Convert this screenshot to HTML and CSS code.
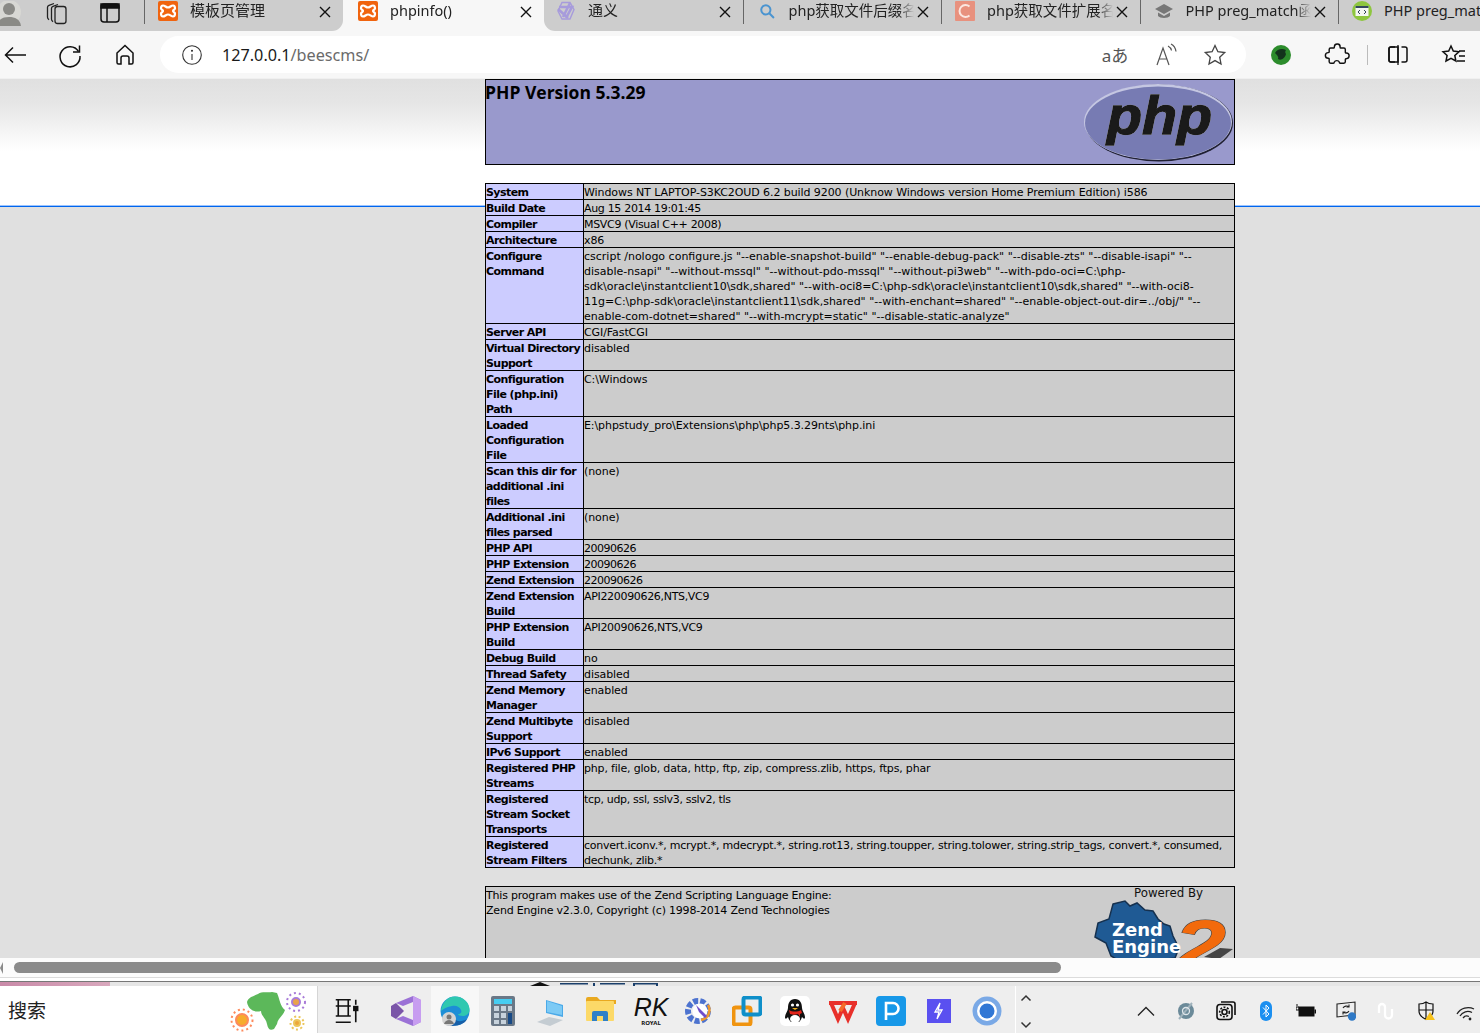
FILE: index.html
```html
<!DOCTYPE html>
<html lang="zh">
<head>
<meta charset="utf-8">
<title>phpinfo()</title>
<link rel="stylesheet" href="styles.css">
</head>
<body>
<div class="tabstrip">
  <div class="strip-left">
    <svg class="avatar" viewBox="0 0 22 26"><circle cx="9" cy="11" r="12" fill="#d8d8d4"/><circle cx="9" cy="8" r="6" fill="#8a8a86"/><path d="M-3 25c1-7 6-9 12-9s11 2 12 9z" fill="#8a8a86"/></svg>
    <svg class="ticon coll" viewBox="0 0 24 24" fill="none" stroke="#222" stroke-width="1.3"><path d="M9 2.500l-5 1.800c-1 .4-1.500 1-1.500 2v10c0 1 .5 1.700 1.500 2.500"/><path d="M13 3.500l-5 1.800c-1 .4-1.500 1-1.500 2v11c0 1 .5 1.700 1.500 2.500"/><rect x="10" y="5.500" width="11" height="17" rx="2.500"/></svg>
    <svg class="ticon vtab" viewBox="0 0 24 24" fill="none" stroke="#111" stroke-width="1.500"><rect x="3" y="3" width="18" height="18" rx="3"/><path d="M3 3h18v4H3z" fill="#111"/><path d="M9 7v14"/></svg>
  </div>
  <div class="tab">
    <svg class="fav" viewBox="0 0 20 20"><rect width="20" height="20" rx="2" fill="#f0640f"/><path d="M5 4.500c2 0 3 2 5 2s3-2 5-2 2 2 2 3-2 1.500-2 2.500 2 1.500 2 2.500-.5 3-2 3-3-2-5-2-3 2-5 2-2-2-2-3 2-1.500 2-2.500-2-1.500-2-2.500.5-3 2-3z" fill="none" stroke="#fff" stroke-width="2.200"/></svg>
    <span class="title zh">模板页管理</span>
    <svg class="close" viewBox="0 0 12 12"><path d="M1 1l10 10M11 1L1 11"/></svg>
  </div>
  <div class="tab active">
    <svg class="fav" viewBox="0 0 20 20"><rect width="20" height="20" rx="2" fill="#f0640f"/><path d="M5 4.500c2 0 3 2 5 2s3-2 5-2 2 2 2 3-2 1.500-2 2.500 2 1.500 2 2.500-.5 3-2 3-3-2-5-2-3 2-5 2-2-2-2-3 2-1.500 2-2.500-2-1.500-2-2.500.5-3 2-3z" fill="none" stroke="#fff" stroke-width="2.200"/></svg>
    <span class="title">phpinfo()</span>
    <svg class="close" viewBox="0 0 12 12"><path d="M1 1l10 10M11 1L1 11"/></svg>
  </div>
  <div class="tab after-active">
    <svg class="fav" viewBox="0 0 20 20" fill="none" stroke="#a79bdc" stroke-width="2.600"><path d="M6 1.500l8 0 4 7-4 9.500-8 0-4-8z" stroke-width="1.400"/><path d="M3 6h13l-6 11M14 2l-7 14M2 8l10 9"/></svg>
    <span class="title zh">通义</span>
    <svg class="close" viewBox="0 0 12 12"><path d="M1 1l10 10M11 1L1 11"/></svg>
  </div>
  <div class="tab">
    <svg class="fav" viewBox="-3 -3 26 26" fill="none" stroke="#4a94d0" stroke-width="2.600"><circle cx="8.500" cy="8.500" r="6"/><path d="M13 13l6 6"/></svg>
    <span class="title">php获取文件后缀名</span>
    <svg class="close" viewBox="0 0 12 12"><path d="M1 1l10 10M11 1L1 11"/></svg>
  </div>
  <div class="tab">
    <svg class="fav" viewBox="0 0 20 20"><rect width="20" height="20" rx="1" fill="#e8917e"/><path d="M14.500 5.500a6 6 0 1 0 0 9" fill="none" stroke="#fbe6e0" stroke-width="2"/></svg>
    <span class="title">php获取文件扩展名</span>
    <svg class="close" viewBox="0 0 12 12"><path d="M1 1l10 10M11 1L1 11"/></svg>
  </div>
  <div class="tab">
    <svg class="fav" viewBox="0 0 20 20" fill="#777"><path d="M10 3L1 8l9 5 9-5z"/><path d="M4 11.500V15c2 2.500 10 2.500 12 0v-3.500L10 15z"/></svg>
    <span class="title">PHP preg_match函数</span>
    <svg class="close" viewBox="0 0 12 12"><path d="M1 1l10 10M11 1L1 11"/></svg>
  </div>
  <div class="tab last">
    <svg class="fav" viewBox="0 0 20 20"><circle cx="10" cy="10" r="10" fill="#8ec63f"/><rect x="3.500" y="5" width="13" height="10" fill="#f4f6f2"/><rect x="3.500" y="5" width="13" height="2" fill="#34495e"/><path d="M8 9l-2 2 2 2M12 9l2 2-2 2" fill="none" stroke="#345" stroke-width="1"/></svg>
    <span class="title">PHP preg_match函数</span>
  </div>
</div>

<div class="toolbar">
  <svg class="tool" viewBox="0 0 30 30" fill="none" stroke="#111" stroke-width="1.500"><path d="M26 24H5.500M13 16.500L5.500 24l7.500 7.500" transform="translate(0 -9)"/></svg>
  <svg class="tool" viewBox="0 0 30 30" fill="none" stroke="#111" stroke-width="1.500"><path d="M23.500 11.500A10 10 0 1 0 25 16"/><path d="M24.500 5.500v6.500H18"/></svg>
  <svg class="tool" viewBox="0 0 30 30" fill="none" stroke="#111" stroke-width="1.500"><path d="M7 13l8-7.500 8 7.500v9.500a1.500 1.500 0 0 1-1.500 1.500H19v-6a2 2 0 0 0-2-2h-4a2 2 0 0 0-2 2v6H8.500A1.500 1.500 0 0 1 7 22.500z"/></svg>
  <div class="address">
    <svg class="addr-info" viewBox="0 0 20 20" fill="none" stroke="#333" stroke-width="1.100"><circle cx="10" cy="10" r="9.300"/><path d="M10 9v6"/><circle cx="10" cy="5.800" r=".5" fill="#333"/></svg>
    <span class="url"><span class="host">127.0.0.1</span>/beescms/</span>
    <div class="addr-actions">
      <span class="aa">aあ</span>
      <svg class="tool" viewBox="0 0 30 30" fill="none" stroke="#555" stroke-width="1.200"><path d="M7 25l6-17 6 17M9.500 19h7"/><path d="M18 6c2 1 3 2 3.500 4.500M21 4c3 1.500 4.500 4 5 7.500"/></svg>
      <svg class="tool" viewBox="0 0 30 30" fill="none" stroke="#444" stroke-width="1.300"><path d="M15 5.500l2.900 6.200 6.800.8-5 4.700 1.300 6.800-6-3.400-6 3.400 1.300-6.800-5-4.700 6.800-.8z"/></svg>
    </div>
  </div>
  <div class="tool-right">
    <svg class="tool" viewBox="0 0 30 30"><circle cx="15" cy="15" r="10" fill="#2c8c2c"/><path d="M9 13c2-4 7-5 11-3-1 1-1 3 0 4-1 4-5 7-8 5 1-2-1-4-3-6z" fill="#13331c"/></svg>
    <svg class="tool" viewBox="0 0 30 30" fill="none" stroke="#111" stroke-width="1.500"><path d="M12 7a3 3 0 0 1 6 .5c0 .5 0 1 .5 1h3.500c1 0 1.500.5 1.500 1.500v3c0 .5 .5 .8 1 .7a3 3 0 0 1 0 6c-.5 0-1 .2-1 .8v2.500c0 1-.5 1.500-1.500 1.500H18c-.5 0-.8-.5-.7-1a3 3 0 0 0-5.500 0c0 .5-.3 1-.8 1H8c-1 0-1.500-.5-1.500-1.500v-3c0-.5-.5-.8-1-.7a3 3 0 0 1 0-6c.5 0 1-.3 1-.8V10c0-1 .5-1.500 1.500-1.500h3.500c.5 0 .5-1 .5-1.500z" transform="translate(1 0) scale(.95)"/></svg>
    <span class="vdiv"></span>
    <svg class="tool" viewBox="0 0 30 30" fill="none" stroke="#111" stroke-width="1.500"><path d="M12 7H8a2 2 0 0 0-2 2v11a2 2 0 0 0 2 2h4"/><path d="M15 5v20" stroke-width="1.300"/><path d="M18.500 7H22a2 2 0 0 1 2 2v11a2 2 0 0 1-2 2h-3.500"/><path d="M6 9a2 2 0 0 1 2-2h7v15H8a2 2 0 0 1-2-2z"/></svg>
    <svg class="tool" viewBox="0 0 30 30" fill="none" stroke="#111" stroke-width="1.500"><path d="M12 6l2.300 5 5.700.7-4.200 3.800 1.100 5.500-4.900-2.700L7 21l1.100-5.500L4 11.700l5.700-.7z"/><path d="M20 11h6M20 16h6M18 21h8"/></svg>
  </div>
</div>

<main class="viewport">
  <div class="page">
    <div class="php-head">
      <h1 class="php-title">PHP Version 5.3.29</h1>
      <svg class="php-logo" viewBox="0 0 150 80">
        <ellipse cx="75" cy="40" rx="74" ry="38.500" fill="#1f1f33"/>
        <ellipse cx="74" cy="39" rx="74" ry="38" fill="#c5c7e2"/>
        <ellipse cx="74" cy="40" rx="73" ry="36.500" fill="#777bb3"/>
        <text class="php-word" x="23" y="51" textLength="105" lengthAdjust="spacingAndGlyphs">php</text>
      </svg>
    </div>

    <table class="info-table">
      <tr><th>System</th><td>Windows NT LAPTOP-S3KC2OUD 6.2 build 9200 (Unknow Windows version Home Premium Edition) i586</td></tr>
      <tr><th>Build Date</th><td class="tight">Aug 15 2014 19:01:45</td></tr>
      <tr><th>Compiler</th><td class="tight">MSVC9 (Visual C++ 2008)</td></tr>
      <tr><th>Architecture</th><td>x86</td></tr>
      <tr><th>Configure<br>Command</th><td class="exact">cscript /nologo configure.js "--enable-snapshot-build" "--enable-debug-pack" "--disable-zts" "--disable-isapi" "--<br>disable-nsapi" "--without-mssql" "--without-pdo-mssql" "--without-pi3web" "--with-pdo-oci=C:\php-<br>sdk\oracle\instantclient10\sdk,shared" "--with-oci8=C:\php-sdk\oracle\instantclient10\sdk,shared" "--with-oci8-<br>11g=C:\php-sdk\oracle\instantclient11\sdk,shared" "--with-enchant=shared" "--enable-object-out-dir=../obj/" "--<br>enable-com-dotnet=shared" "--with-mcrypt=static" "--disable-static-analyze"</td></tr>
      <tr><th>Server API</th><td>CGI/FastCGI</td></tr>
      <tr><th>Virtual Directory<br>Support</th><td>disabled</td></tr>
      <tr><th>Configuration<br>File (php.ini)<br>Path</th><td>C:\Windows</td></tr>
      <tr><th>Loaded<br>Configuration<br>File</th><td>E:\phpstudy_pro\Extensions\php\php5.3.29nts\php.ini</td></tr>
      <tr><th>Scan this dir for<br>additional .ini<br>files</th><td>(none)</td></tr>
      <tr><th>Additional .ini<br>files parsed</th><td>(none)</td></tr>
      <tr><th>PHP API</th><td class="num">20090626</td></tr>
      <tr><th>PHP Extension</th><td class="num">20090626</td></tr>
      <tr><th>Zend Extension</th><td class="num">220090626</td></tr>
      <tr><th>Zend Extension<br>Build</th><td class="tight">API220090626,NTS,VC9</td></tr>
      <tr><th>PHP Extension<br>Build</th><td class="tight">API20090626,NTS,VC9</td></tr>
      <tr><th>Debug Build</th><td>no</td></tr>
      <tr><th>Thread Safety</th><td>disabled</td></tr>
      <tr><th>Zend Memory<br>Manager</th><td>enabled</td></tr>
      <tr><th>Zend Multibyte<br>Support</th><td>disabled</td></tr>
      <tr><th>IPv6 Support</th><td>enabled</td></tr>
      <tr><th>Registered PHP<br>Streams</th><td class="mid">php, file, glob, data, http, ftp, zip, compress.zlib, https, ftps, phar</td></tr>
      <tr><th>Registered<br>Stream Socket<br>Transports</th><td class="tight">tcp, udp, ssl, sslv3, sslv2, tls</td></tr>
      <tr><th>Registered<br>Stream Filters</th><td class="mid2">convert.iconv.*, mcrypt.*, mdecrypt.*, string.rot13, string.toupper, string.tolower, string.strip_tags, convert.*, consumed,<br>dechunk, zlib.*</td></tr>
    </table>

    <div class="zend-box">
      <p class="zend-text">This program makes use of the Zend Scripting Language Engine:<br>Zend Engine v2.3.0, Copyright (c) 1998-2014 Zend Technologies</p>
      <svg class="zend-logo" viewBox="0 0 142 100">
        <text class="powered" x="42" y="10">Powered By</text>
        <path d="M21 17l12-3 5 5 7-3 8 7 8 1 5 8 6 5 6 2 3 10 6 12-4 10-50 6-14-8 -5-13-11-6 3-14 11-4z" fill="#1f5a94" stroke="#16314f" stroke-width="1.500"/>
        <path d="M112 70l16-9 13 1-14 10z" fill="#444"/>
        <text class="zend-word" x="20" y="49">Zend</text>
        <text class="zend-word" x="20" y="66">Engine</text>
        <text class="zend-two" x="82" y="84" textLength="52" lengthAdjust="spacingAndGlyphs">2</text>
      </svg>
    </div>
  </div>
</main>

<div class="hscroll">
  <span class="hs-arrow"></span>
  <span class="hs-thumb"></span>
</div>
<div class="win-edge"></div>
<div class="under">
  <span class="under-pink"></span>
  <svg class="under-text" viewBox="0 0 130 4"><path d="M0 4l10-4 10 4z" fill="#111"/><rect x="30" y="1" width="28" height="1.500" fill="#1a3f6b"/><rect x="63" y="1" width="2" height="3" fill="#1a3f6b"/><rect x="70" y="1" width="25" height="1.500" fill="#1a3f6b"/><rect x="103" y="1" width="25" height="1.500" fill="#1a3f6b"/><rect x="103" y="1" width="2" height="3" fill="#1a3f6b"/><rect x="126" y="1" width="2" height="3" fill="#1a3f6b"/></svg>
</div>

<footer class="taskbar">
  <div class="search">
    <span class="search-label">搜索</span>
    <svg class="search-art" viewBox="0 0 78 44">
      <g fill="none" stroke-width="2"><circle cx="14" cy="32" r="6" fill="#f6ac2d" stroke="#fd8a5c"/><circle cx="14" cy="32" r="10.500" stroke="#fd8a5c" stroke-dasharray="2 3"/><circle cx="68" cy="14" r="4" fill="#e9a24a" stroke="#a97cd8"/><circle cx="68" cy="14" r="9" stroke="#a97cd8" stroke-dasharray="2 3"/><circle cx="69" cy="35" r="3" fill="#eda63a" stroke="#ecc65a"/><circle cx="69" cy="35" r="6.500" stroke="#ecc65a" stroke-dasharray="2 2.500"/></g>
      <path d="M19 14C20 9 26 8 30 6c4-3 10-1 14-2l5 1c3 7 3 13 8 17-2 6-7 8-8 14l-3 5c-4 2-6 0-7-5-1-6-6-8-6-13-7 2-13-2-14-9z" fill="#5cb85a"/>
    </svg>
  </div>
  <div class="apps">
    <span class="app">
      <svg viewBox="0 0 24 24" fill="none" stroke="#111" stroke-width="1.300"><path d="M3 3h12M5 3v5M13 3v5M3 8h12M5 8v8M13 8v8M3 16h12M3 21h12M19 3v4M19 12v9"/><rect x="17.500" y="8.500" width="3" height="3" fill="#111"/></svg>
    </span>
    <span class="app vs">
      <svg viewBox="0 0 30 30"><path d="M0 10l5-3 8 8-8 8-5-3z" fill="#7a55a8"/><path d="M5 7l17-7 8 4v22l-8 4L5 23l7-3 10 4V6l-10 4z" fill="#9b72d6"/><path d="M22 0l8 4v22l-8 4z" fill="#c79df0"/></svg>
    </span>
    <span class="app edge">
      <svg viewBox="0 0 30 30"><circle cx="15" cy="15" r="14.500" fill="#1d8ed6"/><path d="M1 15C2 6 8 .5 15 .5c8 0 14.500 6 14.500 13 0 4-3 6.500-6.500 6.500-3 0-5-1-5-2 3 0 4-2 3-4-1-3-5-5-9-4C6 11 2 14 1 15z" fill="#2fc8b0"/><path d="M7 29c5 2 17 1 20-6-5 3-11 3-13-1-3 0-6 3-7 7z" fill="#175fa8"/><circle cx="9" cy="23" r="7" fill="#d4d4d4"/><circle cx="9" cy="21" r="2.500" fill="#777"/><path d="M4 28c1-3 3-4 5-4s4 1 5 4z" fill="#777"/></svg>
    </span>
    <span class="app">
      <svg viewBox="0 0 24 30"><rect width="24" height="30" rx="2" fill="#6a7887"/><rect x="3" y="3" width="18" height="5" fill="#46cdf2"/><path d="M3 10h5v5H3zM10 10h5v5h-5zM3 17h5v5H3zM10 17h5v5h-5zM3 24h5v4H3zM10 24h5v4h-5z" fill="#c7d2dc"/><path d="M17 10h4v5h-4z" fill="#c7d2dc"/><path d="M17 17h4v11h-4z" fill="#184a86"/></svg>
    </span>
    <span class="app nudge1">
      <svg viewBox="0 0 30 30"><path d="M9 4l17 5v12L9 17z" fill="#4aa9e8"/><path d="M10 5l15 5v9l-15-3z" fill="#7ccaf5"/><path d="M0 26l12-5 14 3-13 6z" fill="#c4ccd2"/></svg>
    </span>
    <span class="app nudge1">
      <svg viewBox="0 0 30 30"><path d="M0 3a2 2 0 0 1 2-2h9l3 3h16v4H0z" fill="#e9a920"/><rect y="5" width="28" height="20" rx="1" fill="#fcd968"/><path d="M6 25v-8a2 2 0 0 1 2-2h12a2 2 0 0 1 2 2v8h-5v-5h-6v5z" fill="#2f80c7"/></svg>
    </span>
    <span class="app rk"><span class="rk-mark">RK</span><span class="rk-sub">ROYAL</span></span>
    <span class="app">
      <svg viewBox="0 0 30 30"><circle cx="14" cy="15" r="10" fill="none" stroke="#4d73cf" stroke-width="6" stroke-dasharray="5 2"/><circle cx="16" cy="15" r="7.500" fill="#fff"/><path d="M17 24a10 10 0 0 0 7-15" fill="none" stroke="#ef9a2d" stroke-width="2.500"/><path d="M12 9l5 5 6 6-2 2-6-6z" fill="#6f4ecb"/></svg>
    </span>
    <span class="app">
      <svg viewBox="0 0 30 30" fill="none"><rect x="1.500" y="11.500" width="17" height="17" rx="2" stroke="#f09410" stroke-width="4"/><rect x="11.500" y="1.500" width="17" height="17" rx="2" stroke="#0f8fc9" stroke-width="4"/></svg>
    </span>
    <span class="app">
      <svg viewBox="0 0 30 30"><rect width="30" height="30" rx="5" fill="#fff"/><path d="M15 3c-5 0-7 4-7 9 0 3-3 6-3 9 0 2 1 2 2 1l1-1c1 3 2 4 3 5h8c1-1 2-2 3-5l1 1c1 1 2 1 2-1 0-3-3-6-3-9 0-5-2-9-7-9z" fill="#111"/><path d="M9 14c3 2 9 2 12 0l1 3-2 1v3l-2-3c-3 1-5 1-8 0z" fill="#e2231a"/><ellipse cx="15" cy="23" rx="5" ry="4" fill="#fff"/><circle cx="12.500" cy="9" r="1.600" fill="#fff"/><circle cx="17.500" cy="9" r="1.600" fill="#fff"/><path d="M12 12h6l-3 2z" fill="#f5b21a"/></svg>
    </span>
    <span class="app">
      <svg viewBox="0 0 30 30" fill="none" stroke="#e8302a" stroke-width="4"><path d="M1 7h28M3 7l7 16 5-11 5 11 7-16"/><path d="M17 7l-5 8" stroke="#f56b2a"/></svg>
    </span>
    <span class="app">
      <svg viewBox="0 0 30 30"><rect width="30" height="30" rx="4" fill="#1798e8"/><path d="M10 24V7h7a5.500 5.500 0 0 1 0 11h-7" fill="none" stroke="#fff" stroke-width="2.600"/></svg>
    </span>
    <span class="app small">
      <svg viewBox="0 0 24 24"><rect width="24" height="24" fill="#5a50f0"/><path d="M13 4l-5 9h4l-2 7 5-9h-4z" fill="none" stroke="#fff" stroke-width="1.300"/></svg>
    </span>
    <span class="app">
      <svg viewBox="0 0 30 30"><circle cx="15" cy="15" r="14.500" fill="#7aa9e6"/><circle cx="15" cy="15" r="10" fill="#fff"/><circle cx="15" cy="15" r="7.500" fill="#3177d5"/></svg>
    </span>
  </div>
  <div class="overflow-btns">
    <svg viewBox="0 0 12 8" fill="none" stroke="#333" stroke-width="1.500"><path d="M1.500 6.500L6 2l4.500 4.500"/></svg>
    <svg viewBox="0 0 12 8" fill="none" stroke="#333" stroke-width="1.500"><path d="M1.500 1.500L6 6l4.500-4.500"/></svg>
  </div>
  <div class="tray">
    <svg viewBox="0 0 20 20" fill="none" stroke="#222" stroke-width="1.300"><path d="M2 14.500l8-8 8 8"/></svg>
    <svg viewBox="0 0 20 20" fill="none"><circle cx="10" cy="10" r="8" fill="#6b8a99"/><path d="M16 2L3 18" stroke="#9fb2bc" stroke-width="2"/><circle cx="10" cy="10" r="3.500" stroke="#dfe6ea" stroke-width="1.300"/></svg>
    <svg viewBox="0 0 20 20" fill="none" stroke="#111" stroke-width="1.600"><rect x="1" y="3.500" width="15" height="15" rx="3"/><path d="M5 1h12a2 2 0 0 1 2 2v11"/><circle cx="8.500" cy="11" r="2.500"/><circle cx="8.500" cy="11" r="4.800" stroke-dasharray="2 1.500"/></svg>
    <svg viewBox="0 0 20 20"><rect x="4" width="12" height="20" rx="6" fill="#1b8ff0"/><path d="M7 6.500l6 6.500-3 3V4l3 3-6 6.500" fill="none" stroke="#fff" stroke-width="1"/></svg>
    <svg viewBox="0 0 20 20"><rect x="3" y="6" width="15" height="9" fill="#111" stroke="#111"/><rect x="18.500" y="8.500" width="1.500" height="4" fill="#111"/><path d="M1 3v2M0 6h3v3H0z" stroke="#111" fill="none"/></svg>
    <span class="tray-badge">
      <svg viewBox="0 0 20 20" fill="none" stroke="#222" stroke-width="1.100"><path d="M1 3l18-2v13l-10 1-8 1z"/><path d="M7 7a4 4 0 0 1 6-1M13 10a4 4 0 0 1-6 1M13 3.500V6h-2.500M7 13.500V11h2.500"/><circle cx="16" cy="15.500" r="4.200" fill="#2f79c6" stroke="none"/></svg>
    </span>
    <svg viewBox="0 0 20 20" fill="none" stroke="#fff" stroke-width="2.300"><path d="M3 12V6a3 3 0 0 1 6 0v8a3 3 0 0 0 7 0V8"/></svg>
    <svg viewBox="0 0 20 20" fill="none" stroke="#111" stroke-width="1.200"><path d="M10 1c2 1.500 4.500 2 7 2v7c0 4-3 6.500-7 8.500-4-2-7-4.500-7-8.500V3c2.500 0 5-.5 7-2zM10 1v17.500M3 9h14"/><path d="M14 11l5 8h-10z" fill="#f7c21a" stroke="none"/></svg>
    <svg viewBox="0 0 20 20" fill="none" stroke="#222" stroke-width="1.300"><path d="M1 13a13 13 0 0 1 17-5M4 15a9 9 0 0 1 12-3.500M7 17a5 5 0 0 1 6-1.500"/><circle cx="14" cy="18" r="1.400" fill="#222" stroke="none"/></svg>
  </div>
</footer>
</body>
</html>
```

FILE: styles.css
```css
* { box-sizing: border-box; }
html, body { height: 100%; }
body {
  margin: 0;
  height: 1033px;
  overflow: hidden;
  display: flex;
  flex-direction: column;
  font-family: "Noto Sans", "Noto Sans CJK SC", sans-serif;
  color: #111;
  background: #fff;
}

/* tab strip */
.tabstrip {
  flex: 0 0 31px;
  display: flex;
  background: #f7f7f7;
  overflow: hidden;
}
.strip-left {
  flex: 0 0 144px;
  display: flex;
  align-items: center;
  background: #cdcdcd;
  height: 31px;
}
.avatar { width: 22px; height: 26px; flex: none; margin-top: -4px; }
.ticon { width: 24px; height: 24px; flex: none; margin-top: -6px; }
.coll { margin-left: 23px; }
.vtab { margin-left: 29px; }

.tab {
  flex: 0 0 198.5px;
  min-width: 0;
  height: 31px;
  display: flex;
  align-items: flex-start;
  padding: 1px 12px 0 14px;
  background: linear-gradient(#666, #666) left top / 1px 24px no-repeat, #cdcdcd;
}
.tab:nth-child(2) { border-bottom-right-radius: 11px; }
.tab.active { flex-basis: 201.5px; padding-left: 15.5px; background: #f7f7f7; }
.tab.after-active { background: #cdcdcd; border-bottom-left-radius: 11px; padding-left: 12px; }
.tab.last { flex: 1 0 142px; padding-right: 0; }
.fav { width: 20px; height: 20px; flex: none; }
.title {
  flex: 1;
  min-width: 0;
  margin: -3px 3px 0 12px;
  font-size: 14.5px;
  line-height: 24px;
  color: #222;
  white-space: nowrap;
  overflow: hidden;
  -webkit-mask-image: linear-gradient(to right, #000 88%, transparent 100%);
  mask-image: linear-gradient(to right, #000 88%, transparent 100%);
}
.title.zh { font-size: 15px; }
.tab.last .title { -webkit-mask-image: none; mask-image: none; margin-right: 0; }
.close {
  width: 12px;
  height: 12px;
  flex: none;
  margin-top: 5px;
  fill: none;
  stroke: #111;
  stroke-width: 1.400;
}

/* toolbar */
.toolbar {
  flex: 0 0 48px;
  display: flex;
  align-items: flex-start;
  gap: 25px;
  padding-top: 9px;
  background: #f7f7f7;
  border-bottom: 1px solid #f0f0f0;
}
.tool { width: 30px; height: 30px; flex: none; }
.address {
  flex: 0 0 1086px;
  min-width: 0;
  height: 37px;
  margin: -4px 0 0 -5px;
  display: flex;
  align-items: center;
  padding: 0 16px 0 22px;
  background: #fff;
  border-radius: 19px;
}
.addr-info { width: 20px; height: 20px; flex: none; }
.url {
  margin-left: 20px;
  font-size: 16.200px;
  color: #6a6a6a;
  white-space: nowrap;
}
.host { color: #1a1a1a; }
.addr-actions {
  margin-left: auto;
  display: flex;
  align-items: center;
  gap: 20px;
}
.aa {
  width: 30px;
  text-align: center;
  font-size: 17px;
  color: #555;
  white-space: nowrap;
}
.tool-right {
  margin-left: -5px;
  display: flex;
  align-items: flex-start;
  gap: 26px;
}
.vdiv {
  width: 1px;
  height: 20px;
  margin: 5px -11px 0 -11px;
  background: #bbb;
}

/* page viewport */
.viewport {
  flex: 0 0 879px;
  overflow: hidden;
  background: linear-gradient(#e0e0e0 0, #e6e6e6 25px, #ffffff 72px, #ffffff 126px, #9cc4ff 126px, #9cc4ff 127px, #0066ee 127px, #0066ee 128px, #e0e0e0 128px);
}
.page {
  width: 750px;
  margin-left: 485px;
  font-family: "DejaVu Sans", Verdana, sans-serif;
  font-size: 11px;
  line-height: 15px;
  color: #000;
}
.php-head {
  height: 86px;
  display: flex;
  justify-content: space-between;
  background: #9999cc;
  border: 1px solid #000;
}
.php-title {
  margin: 0 0 0 -1px;
  font-family: "Open Sans", "DejaVu Sans", sans-serif;
  font-size: 17.500px;
  line-height: 24px;
  font-weight: 700;
}
.php-logo { width: 150px; height: 80px; margin-top: 3px; flex: none; }
.php-word {
  font-family: "Liberation Sans", sans-serif;
  font-style: italic;
  font-weight: 700;
  font-size: 53px;
  fill: #1a1a1a;
  stroke: #1a1a1a;
  stroke-width: 1.400;
  filter: drop-shadow(0 0 .7px #fff);
}

.info-table {
  width: 750px;
  margin-top: 18px;
  border-collapse: collapse;
  table-layout: fixed;
}
.info-table th, .info-table td {
  border: 1px solid #000;
  padding: 1px 0 0;
  vertical-align: top;
  text-align: left;
  white-space: nowrap;
  overflow: hidden;
}
.info-table th::after, .info-table td::after {
  content: "";
  display: block;
  margin-top: -1px;
}
.info-table th { width: 98px; background: #ccccff; font-weight: 700; letter-spacing: -.55px; }
.info-table td { background: #cccccc; letter-spacing: -.08px; }
.info-table td.exact { letter-spacing: 0; }
.info-table td.mid { letter-spacing: -.18px; }
.info-table td.mid2 { letter-spacing: -.24px; }
.info-table td.tight { letter-spacing: -.32px; }
.info-table td.num { letter-spacing: -.5px; }

.zend-box {
  height: 110px;
  margin-top: 18px;
  display: flex;
  justify-content: space-between;
  background: #cccccc;
  border: 1px solid #000;
}
.zend-text { margin: 1px 0 0; letter-spacing: -.2px; }
.zend-logo { width: 142px; height: 100px; flex: none; }
.powered { font-family: "DejaVu Sans", sans-serif; font-size: 11.800px; fill: #111; }
.zend-word {
  font-family: "DejaVu Sans", sans-serif;
  font-weight: 700;
  font-size: 18px;
  fill: #fff;
}
.zend-two {
  font-family: "Liberation Sans", sans-serif;
  font-weight: 700;
  font-style: italic;
  font-size: 72px;
  fill: #f26a0c;
  stroke: #444;
  stroke-width: 1;
  paint-order: stroke;
}

/* horizontal scrollbar */
.hscroll {
  flex: 0 0 19px;
  display: flex;
  align-items: flex-start;
  padding-top: 4px;
  background: #fcfcfc;
}
.hs-arrow {
  width: 0;
  height: 0;
  border: 6px solid transparent;
  border-left-width: 0;
  border-right: 3px solid #8b8b8b;
}
.hs-thumb {
  width: 1047px;
  height: 11px;
  margin-left: 11px;
  border-radius: 6px;
  background: #8b8b8b;
}
.win-edge {
  flex: 0 0 4px;
  background: #fff;
  border-top: 1px solid #dcdcdc;
}
.under {
  flex: 0 0 5px;
  display: flex;
  background: #e6e6e6;
  border-top: 1px solid #777;
  overflow: hidden;
}
.under-pink {
  width: 110px;
  background: linear-gradient(to right, #c98aa8, #d9a8bd);
}
.under-text { width: 130px; height: 4px; margin-left: 420px; }

/* taskbar */
.taskbar {
  flex: 0 0 47px;
  display: flex;
  background: #eeeeee;
}
.search {
  flex: 0 0 318px;
  display: flex;
  align-items: center;
  padding-left: 8px;
  background: #fff;
  border-right: 1px solid #d5d5d5;
}
.search-label {
  font-family: "Noto Sans CJK SC", sans-serif;
  font-size: 19px;
  color: #222;
}
.search-art { width: 78px; height: 44px; margin-left: 182px; flex: none; }
.apps {
  display: flex;
  padding-left: 5px;
}
.app {
  flex: 0 0 48px;
  height: 47px;
  padding-top: 2px;
  display: flex;
  align-items: center;
  justify-content: center;
}
.app svg { width: 30px; height: 30px; }
.app.small svg { width: 24px; height: 24px; }
.vs { margin-left: 11px; margin-right: 1px; }
.edge { background: #f7f7f7; }
.nudge1 { margin-left: 1px; }
.rk {
  margin-left: 2px;
  flex-direction: column;
  line-height: 1;
  color: #111;
}
.rk-mark {
  font-family: "Liberation Sans", sans-serif;
  font-style: italic;
  font-size: 25px;
}
.rk-sub { font-size: 6px; font-weight: 700; }
.overflow-btns {
  flex: 0 0 20px;
  margin-left: 4px;
  display: flex;
  flex-direction: column;
  justify-content: space-between;
  align-items: center;
  padding: 8px 0 4px;
  border-left: 1px solid #fff;
}
.overflow-btns svg { width: 12px; height: 8px; }
.tray {
  margin-left: 101px;
  padding-top: 2px;
  display: flex;
  align-items: center;
  gap: 20px;
  flex: none;
}
.tray > svg, .tray-badge svg { width: 20px; height: 20px; display: block; }
```
